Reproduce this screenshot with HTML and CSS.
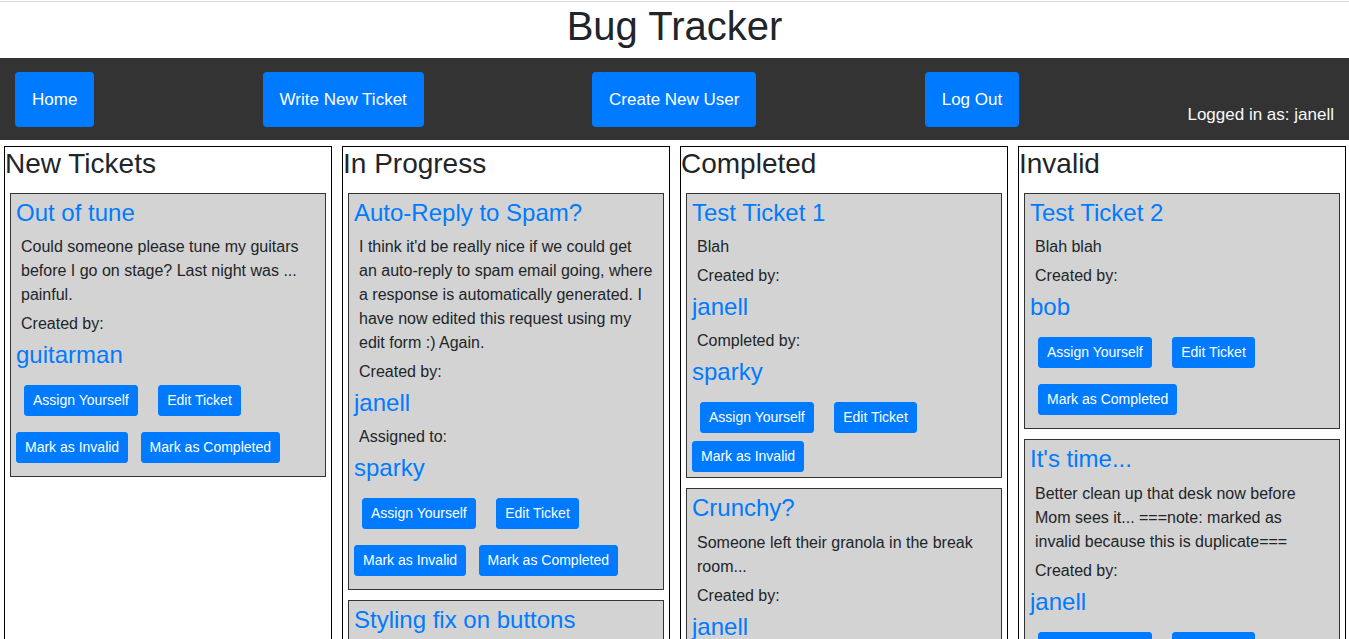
FILE: index.html
```html
<!DOCTYPE html>
<html lang="en">
<head>
<meta charset="utf-8">
<title>Bug Tracker</title>
<link rel="stylesheet" href="styles.css">
</head>
<body>
<header class="header">
  <h1 class="site-title">Bug Tracker</h1>
</header>
<nav class="nav">
  <a class="nav-btn" href="#">Home</a>
  <a class="nav-btn" href="#">Write New Ticket</a>
  <a class="nav-btn" href="#">Create New User</a>
  <a class="nav-btn" href="#">Log Out</a>
  <span class="login">Logged in as: janell</span>
</nav>
<main class="board">
  <section class="col">
    <h3 class="col-title">New Tickets</h3>
    <article class="card">
      <h4 class="ticket-title"><a href="#">Out of tune</a></h4>
      <p class="text">Could someone please tune my guitars before I go on stage? Last night was ... painful.</p>
      <p class="text">Created by:</p>
      <h4 class="user"><a href="#">guitarman</a></h4>
      <div class="actions">
        <button class="btn btn-m">Assign Yourself</button>
        <button class="btn btn-m">Edit Ticket</button>
        <button class="btn">Mark as Invalid</button>
        <button class="btn btn-m">Mark as Completed</button>
      </div>
    </article>
  </section>

  <section class="col">
    <h3 class="col-title">In Progress</h3>
    <article class="card">
      <h4 class="ticket-title"><a href="#">Auto-Reply to Spam?</a></h4>
      <p class="text">I think it'd be really nice if we could get an auto-reply to spam email going, where a response is automatically generated. I have now edited this request using my edit form :) Again.</p>
      <p class="text">Created by:</p>
      <h4 class="user"><a href="#">janell</a></h4>
      <p class="text">Assigned to:</p>
      <h4 class="user"><a href="#">sparky</a></h4>
      <div class="actions">
        <button class="btn btn-m">Assign Yourself</button>
        <button class="btn btn-m">Edit Ticket</button>
        <button class="btn">Mark as Invalid</button>
        <button class="btn btn-m">Mark as Completed</button>
      </div>
    </article>
    <article class="card">
      <h4 class="ticket-title"><a href="#">Styling fix on buttons</a></h4>
      <p class="text">The buttons on the ticket cards need some spacing fixes.</p>
      <p class="text">Created by:</p>
      <h4 class="user"><a href="#">janell</a></h4>
      <p class="text">Assigned to:</p>
      <h4 class="user"><a href="#">janell</a></h4>
      <div class="actions">
        <button class="btn btn-m">Assign Yourself</button>
        <button class="btn btn-m">Edit Ticket</button>
        <button class="btn">Mark as Invalid</button>
        <button class="btn btn-m">Mark as Completed</button>
      </div>
    </article>
  </section>

  <section class="col">
    <h3 class="col-title">Completed</h3>
    <article class="card">
      <h4 class="ticket-title"><a href="#">Test Ticket 1</a></h4>
      <p class="text">Blah</p>
      <p class="text">Created by:</p>
      <h4 class="user"><a href="#">janell</a></h4>
      <p class="text">Completed by:</p>
      <h4 class="user"><a href="#">sparky</a></h4>
      <div class="actions">
        <button class="btn btn-m">Assign Yourself</button>
        <button class="btn btn-m">Edit Ticket</button>
        <button class="btn">Mark as Invalid</button>
      </div>
    </article>
    <article class="card">
      <h4 class="ticket-title"><a href="#">Crunchy?</a></h4>
      <p class="text">Someone left their granola in the break room...</p>
      <p class="text">Created by:</p>
      <h4 class="user"><a href="#">janell</a></h4>
      <p class="text">Completed by:</p>
      <h4 class="user"><a href="#">bob</a></h4>
      <div class="actions">
        <button class="btn btn-m">Assign Yourself</button>
        <button class="btn btn-m">Edit Ticket</button>
        <button class="btn">Mark as Invalid</button>
      </div>
    </article>
  </section>

  <section class="col">
    <h3 class="col-title">Invalid</h3>
    <article class="card">
      <h4 class="ticket-title"><a href="#">Test Ticket 2</a></h4>
      <p class="text">Blah blah</p>
      <p class="text">Created by:</p>
      <h4 class="user"><a href="#">bob</a></h4>
      <div class="actions">
        <button class="btn btn-m">Assign Yourself</button>
        <button class="btn btn-m">Edit Ticket</button>
        <button class="btn btn-m">Mark as Completed</button>
      </div>
    </article>
    <article class="card">
      <h4 class="ticket-title"><a href="#">It's time...</a></h4>
      <p class="text">Better clean up that desk now before Mom sees it... ===note: marked as invalid because this is duplicate===</p>
      <p class="text">Created by:</p>
      <h4 class="user"><a href="#">janell</a></h4>
      <div class="actions">
        <button class="btn btn-m">Assign Yourself</button>
        <button class="btn btn-m">Edit Ticket</button>
        <button class="btn btn-m">Mark as Completed</button>
      </div>
    </article>
  </section>
</main>
</body>
</html>
```
FILE: styles.css
```css
* { box-sizing: border-box; }

body {
  margin: 0;
  font-family: "Liberation Sans", Arial, sans-serif;
  font-size: 16px;
  line-height: 1.5;
  color: #212529;
  background: #fff;
}

a { color: #007bff; text-decoration: none; }

.header {
  margin-top: 1px;
  border-top: 1px solid #dedede;
}

.site-title {
  margin: 0 0 8px;
  font-size: 40px;
  font-weight: 500;
  line-height: 48px;
  text-align: center;
}

.nav {
  display: flex;
  justify-content: space-between;
  align-items: flex-end;
  padding: 14px 15px 13px;
  background: #333;
  font-size: 17px;
}

.nav-btn {
  display: inline-flex;
  align-items: center;
  height: 55px;
  padding: 0 17px;
  border-radius: 4px;
  background: #007bff;
  color: #fff;
}

.login {
  color: #f8f9fa;
  line-height: 24px;
}

.board {
  display: grid;
  grid-template-columns: repeat(4, 1fr);
  gap: 10px;
  padding: 0 3px 0 4px;
  margin-top: 6px;
}

.col {
  display: flex;
  flex-direction: column;
  align-items: stretch;
  border: 1px solid #000;
  min-width: 0;
}

.col-title {
  margin: 0 0 7px;
  font-size: 28px;
  font-weight: 500;
  line-height: 1.2;
}

.card {
  margin: 5px;
  padding: 5px 5px 5px;
  background: #d3d3d3;
  border: 1px solid #333;
}

.ticket-title,
.user {
  margin: 0 0 7px;
  font-size: 24px;
  font-weight: 500;
  line-height: 1.2;
}

.ticket-title {
  margin-bottom: 8px;
}

.text {
  margin: 5px;
}

.btn {
  display: inline-block;
  margin: 0;
  padding: 4px 8px;
  border: 1px solid #007bff;
  border-radius: 3px;
  background: #007bff;
  color: #fff;
  font-family: "Liberation Sans", Arial, sans-serif;
  font-size: 14px;
  line-height: 1.5;
  vertical-align: baseline;
  cursor: pointer;
}

.btn-m {
  margin: 8px;
}
```
